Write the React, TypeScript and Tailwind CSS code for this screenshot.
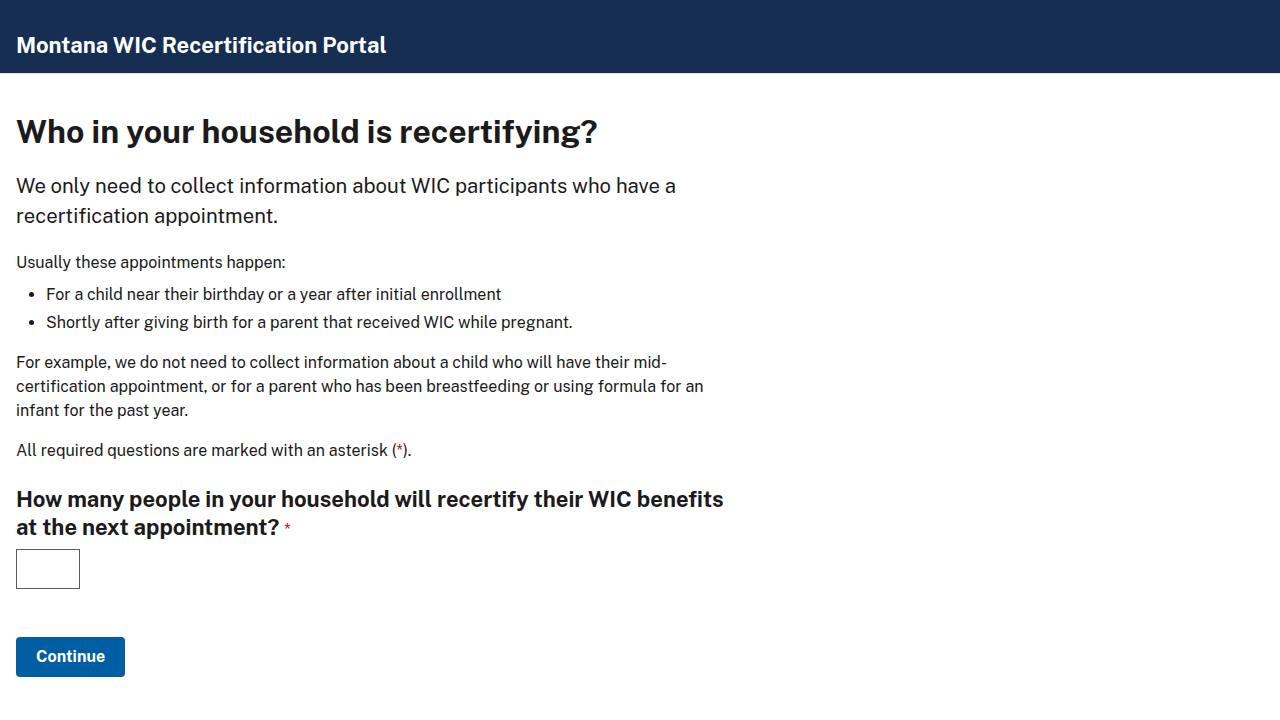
export default function App() {
  return (
    <div className="min-h-screen bg-white font-['Public_Sans','Liberation_Sans',sans-serif] text-[#1b1b1b]">
      <header className="h-[74px] border-b border-[#dfe1e2] bg-[#162e51] px-4">
        <div className="flex h-full items-end pb-[14px]">
          <h1 className="text-[22px] font-bold leading-[28px] text-white">Montana WIC Recertification Portal</h1>
        </div>
      </header>

      <main className="w-[760px] px-4 pt-[38px] pb-10">
        <h1 className="text-[32px] font-bold leading-[40px]">Who in your household is recertifying?</h1>
        <p className="mt-[19px] text-[20.3px] leading-[30px]">
          We only need to collect information about WIC participants who have a recertification appointment.
        </p>

        <p className="mt-[20px] text-base leading-6">Usually these appointments happen:</p>
        <ul className="mt-[8px] list-disc pl-[30px] text-base leading-6">
          <li className="mb-1">For a child near their birthday or a year after initial enrollment</li>
          <li className="mb-1">Shortly after giving birth for a parent that received WIC while pregnant.</li>
        </ul>

        <p className="mt-[16px] w-[704px] text-base leading-6">
          For example, we do not need to collect information about a child who will have their mid-certification
          appointment, or for a parent who has been breastfeeding or using formula for an infant for the past year.
        </p>
        <p className="mt-4 text-base leading-6">
          All required questions are marked with an asterisk (<span className="text-[#b50909]">*</span>).
        </p>

        <fieldset className="mt-[22px]">
          <label htmlFor="count" className="block text-[22px] font-bold leading-[28px]">
            How many people in your household will recertify their WIC benefits at the next appointment?{" "}
            <span className="text-base font-normal text-[#b50909]">*</span>
          </label>
          <input
            id="count"
            type="text"
            className="mt-[7px] block h-10 w-16 border border-[#565c65] bg-white px-2 text-base"
          />
        </fieldset>

        <button className="mt-12 h-10 rounded bg-[#005ea2] px-5 text-base font-bold text-white">Continue</button>
      </main>
    </div>
  );
}
